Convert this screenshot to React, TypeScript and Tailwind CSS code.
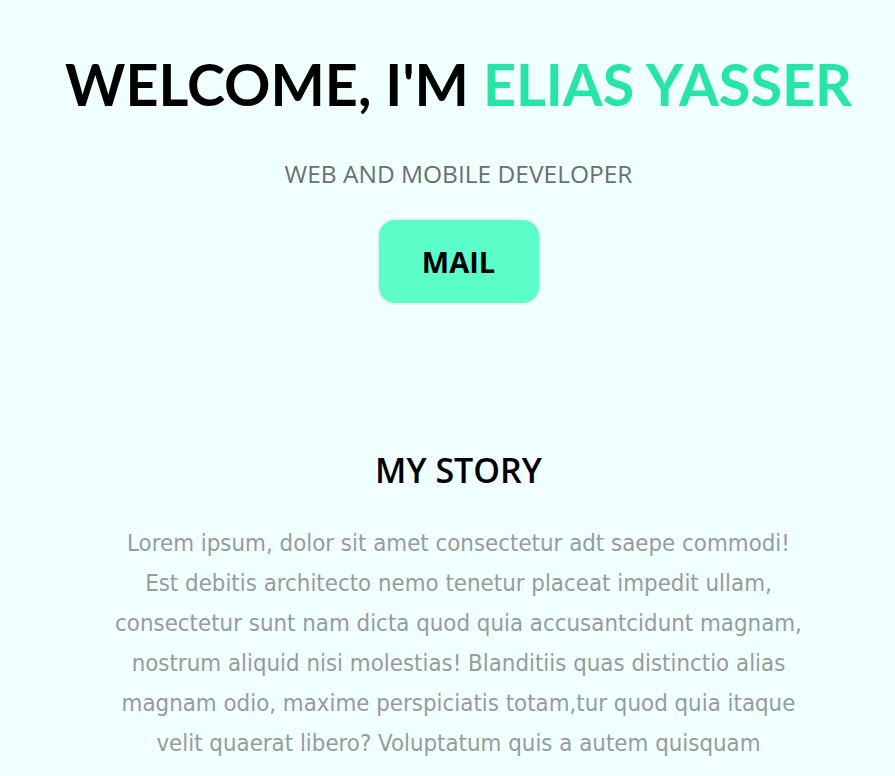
import React from "react";

export default function App() {
  const lines = [
    "Lorem ipsum, dolor sit amet consectetur adt saepe commodi!",
    "Est debitis architecto nemo tenetur placeat impedit ullam,",
    "consectetur sunt nam dicta quod quia accusantcidunt magnam,",
    "nostrum aliquid nisi molestias! Blanditiis quas distinctio alias",
    "magnam odio, maxime perspiciatis totam,tur quod quia itaque",
    "velit quaerat libero? Voluptatum quis a autem quisquam",
  ];
  return (
    <div className="min-h-[776px] bg-[#f0ffff] pl-[22px] flex flex-col items-center overflow-hidden" style={{ fontFamily: '"Open Sans", sans-serif' }}>
      <h1 className="mt-[44px] text-[57.5px] leading-[80px] font-bold text-black whitespace-nowrap" style={{ fontFamily: 'Lato, sans-serif' }}>
        WELCOME, I'M <span className="text-[#26e5a5]">ELIAS YASSER</span>
      </h1>
      <p className="mt-[35px] text-[24.5px] leading-[30px] text-[#6e6e6e]">WEB AND MOBILE DEVELOPER</p>
      <a className="mt-[29px] w-[164px] h-[87px] rounded-[18px] bg-[#5bfdc8] border-2 border-[#eeeeee] flex items-center justify-center text-[29px] font-bold text-black">
        MAIL
      </a>
      <h2 className="mt-[145px] text-[34px] leading-[40px] font-semibold text-black">MY STORY</h2>
      <p className="mt-[33px] text-[23.8px] leading-[40px] text-[#9a9a9a] text-center" style={{ fontFamily: '"DejaVu Sans Condensed", "DejaVu Sans", sans-serif' }}>
        {lines.map((l, i) => (
          <React.Fragment key={i}>
            {l}
            {i < lines.length - 1 && <br />}
          </React.Fragment>
        ))}
      </p>
    </div>
  );
}
